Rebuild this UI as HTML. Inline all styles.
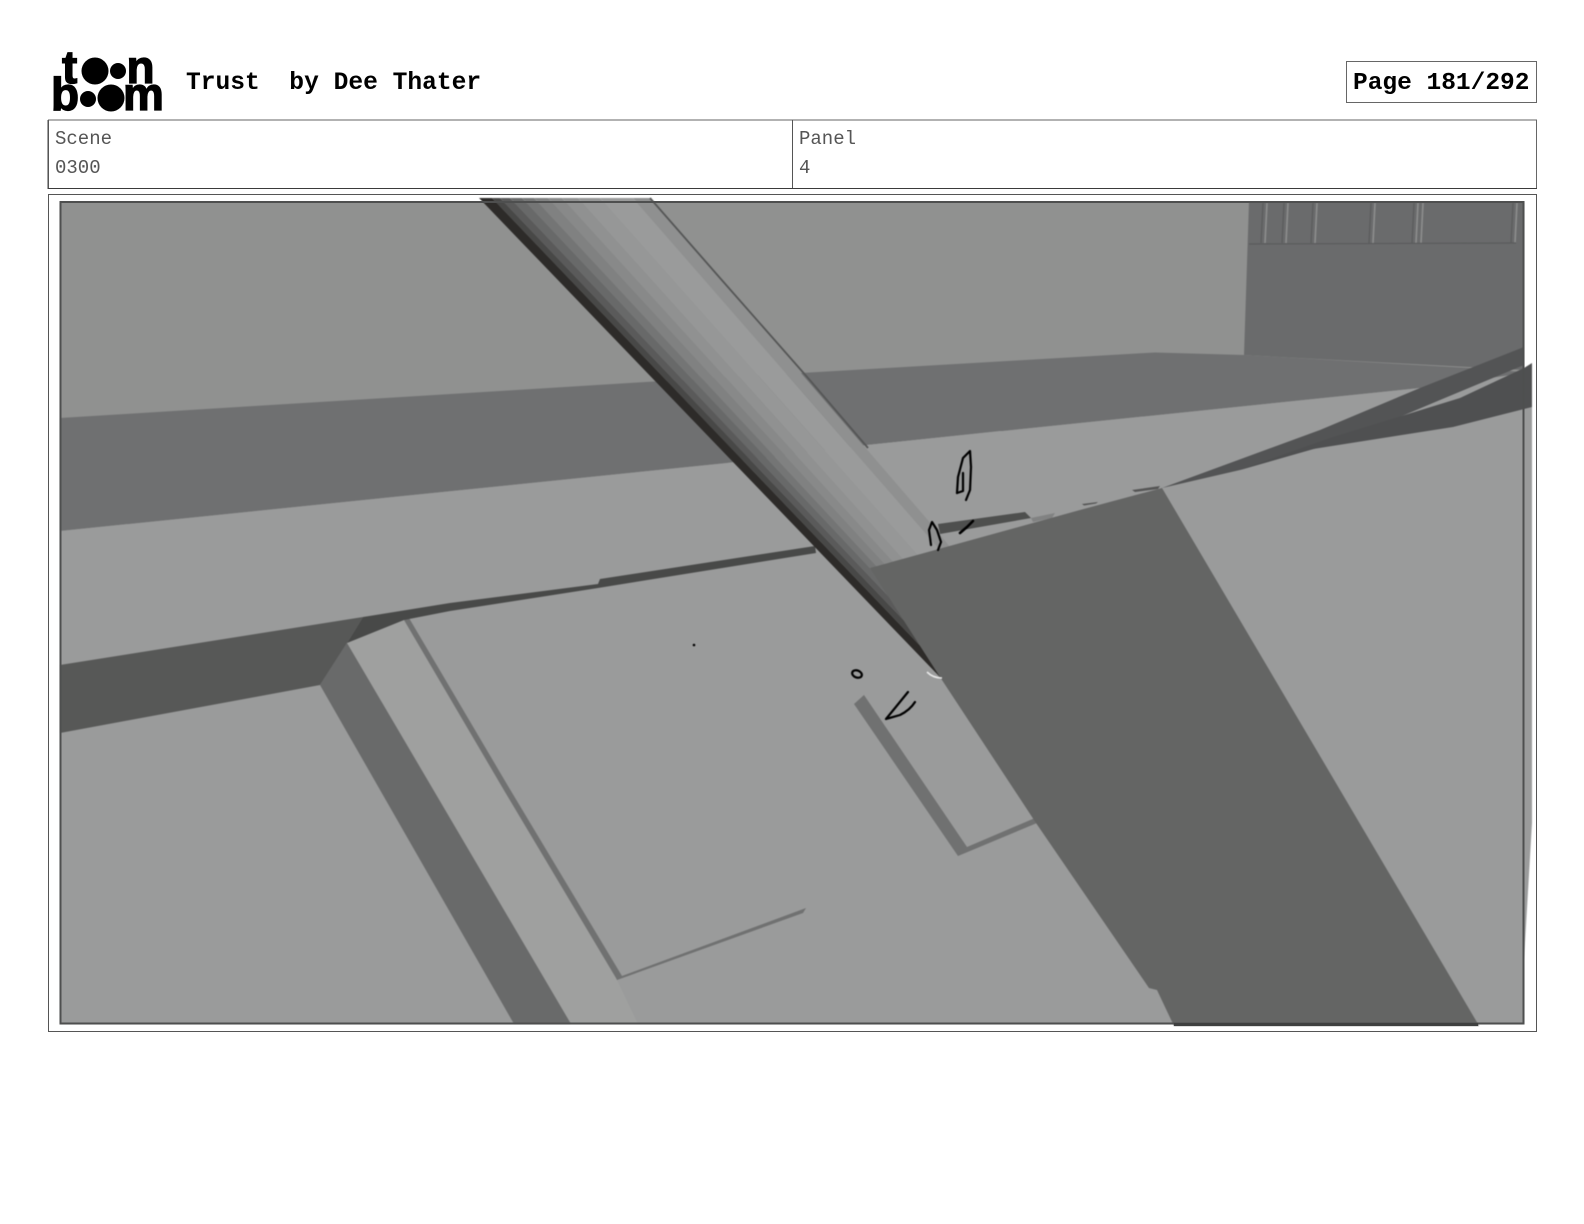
<!DOCTYPE html>
<html lang="en"><head><meta charset="utf-8"><title>Trust by Dee Thater - Page 181/292</title>
<style>
html,body{margin:0;padding:0;background:#fff}
body{width:1584px;height:1224px;position:relative;overflow:hidden}
svg{position:absolute;left:0;top:0}
.m{font-family:"Liberation Mono",monospace}
.l{font-family:"Liberation Sans",sans-serif;font-weight:700;font-size:46px;fill:#000;stroke:#000;stroke-width:1.3}
</style></head><body>
<svg width="1584" height="1224" viewBox="0 0 1584 1224" xmlns="http://www.w3.org/2000/svg">
<rect width="1584" height="1224" fill="#fff"/>
<!-- logo -->
<text class="l" x="62" y="83">t</text>
<circle cx="95" cy="71" r="13.5"/><circle cx="118" cy="71" r="8"/>
<text class="l" x="126.500" y="83">n</text>
<text class="l" x="51" y="110">b</text>
<circle cx="88" cy="99" r="8"/><circle cx="111" cy="98" r="13.5"/>
<text class="l" x="123" y="110">m</text>
<!-- header -->
<text class="m" x="186" y="89" font-size="24.6" font-weight="700" xml:space="preserve" style="white-space:pre">Trust  by Dee Thater</text>
<rect x="1346.5" y="61.5" width="190" height="41" fill="#fff" stroke="#666"/>
<text class="m" x="1353" y="89" font-size="24.5" font-weight="700">Page 181/292</text>
<!-- table -->
<rect x="48.5" y="120" width="1488" height="68.5" fill="#fff" stroke="#666"/>
<line x1="48" y1="120" x2="48" y2="189" stroke="#444" stroke-width="1"/>
<line x1="48" y1="188.5" x2="1537" y2="188.5" stroke="#3a3a3a"/>
<line x1="792.5" y1="120" x2="792.5" y2="188" stroke="#555"/>
<text class="m" x="55" y="144" font-size="19" fill="#555">Scene</text>
<text class="m" x="55" y="173" font-size="19" fill="#555">0300</text>
<text class="m" x="799" y="144" font-size="19" fill="#555">Panel</text>
<text class="m" x="799" y="173" font-size="19" fill="#555">4</text>
<!-- image frame -->
<rect x="48.5" y="194.5" width="1488" height="837" fill="#fff" stroke="#555"/>
<!-- scene -->
<g style="filter:blur(.45px)">
<rect x="60" y="202" width="1464" height="822" fill="#909190"/>
<!-- back wall -->
<polygon points="1249,202 1524,202 1524,370 1244,355" fill="#6a6b6c"/>
<g stroke="#5a5b5c" stroke-width="1.2"><line x1="1263" y1="203" x2="1261" y2="243"/><line x1="1284" y1="203" x2="1282" y2="243"/><line x1="1313" y1="203" x2="1311" y2="243"/><line x1="1371" y1="203" x2="1369" y2="243"/><line x1="1414" y1="203" x2="1412" y2="243"/><line x1="1513" y1="203" x2="1511" y2="243"/></g>
<g stroke="#8d8e8e" stroke-width="1.6"><line x1="1267" y1="203" x2="1265" y2="243"/><line x1="1288" y1="203" x2="1286" y2="243"/><line x1="1317" y1="203" x2="1315" y2="243"/><line x1="1375" y1="203" x2="1373" y2="243"/><line x1="1418" y1="203" x2="1416" y2="243"/><line x1="1423" y1="203" x2="1421" y2="243"/><line x1="1517" y1="203" x2="1515" y2="243"/></g>
<polyline points="1249,244 1516,243" fill="none" stroke="#5a5b5c" stroke-width="1.2"/>
<!-- band -->
<polygon points="60,418 646,382 1155,352.5 1244,355 1470,368 1524,372 1524,400 1420,388 867,445 727,463 60,531" fill="#6f7071"/>
<!-- floor -->
<polygon points="60,531 727,463 867,445 1420,388 1532,372 1532,823 1524,960 1524,1024 60,1024" fill="#9a9b9b"/>
<!-- strips lower left -->
<polygon points="347,643 404,620 616,978 638,1024 571,1024" fill="#9fa09f"/>
<polygon points="347,643 320,685 514,1024 571,1024" fill="#696a6a"/>
<polygon points="404,620 409,618 508,786 622,976 806,908 803,913 617,980 616,978 505,792" fill="#707171"/>
<!-- dark left band & seam -->
<polygon points="60,665 363,617 347,643 320,685 60,733" fill="#575857"/>
<polygon points="363,617 450,603 598,584 600,579 815,546 816,553 598,588 450,611 404,620 347,643" fill="#484948"/>
<!-- small strip -->
<polygon points="864,695 854,704 958,856 1037,823 1035,818 967,847" fill="#707171"/>
<!-- tube strips -->
<g>
<polygon points="479,198 492,198 972,700 962,700" fill="#2d2b29"/>
<polygon points="492,198 500,198 980,700 972,700" fill="#484847"/>
<polygon points="500,198 510,198 987,700 980,700" fill="#5a5a5a"/>
<polygon points="510,198 522,198 994,700 987,700" fill="#686969"/>
<polygon points="522,198 534,198 1001,700 994,700" fill="#747575"/>
<polygon points="534,198 548,198 1010,700 1001,700" fill="#808181"/>
<polygon points="548,198 562,198 1019,700 1010,700" fill="#888989"/>
<polygon points="562,198 578,198 1030,700 1019,700" fill="#909191"/>
<polygon points="578,198 600,198 1047,700 1030,700" fill="#969797"/>
<polygon points="600,198 633,198 1071,700 1047,700" fill="#9a9b9b"/>
<polygon points="633,198 650,198 1083,700 1071,700" fill="#8f9090"/>
</g>
<!-- floor cover right of the tube's lower-right edge -->
<polygon points="867,445 928,520 950,547 1162,488 1162,440 1000,431" fill="#9a9b9b"/>
<polygon points="938,524 1025,512 1031,518 940,534" fill="#4e4f4e"/>
<polygon points="1031,518 1055,513 1052,518 1033,522" fill="#818282"/>
<polygon points="1082,504 1098,502 1096,503.500 1084,505.500" fill="#555"/>
<polygon points="1132,490 1160,486 1158,489 1135,492" fill="#555"/>
<polyline points="650,198 720,278 808,378 868,448" fill="none" stroke="#555656" stroke-width="1.8"/>
<!-- wedges -->
<polygon points="1524,347 1420,388 1320,430 1162,488 1240,470 1345,440 1440,400 1524,365" fill="#535455"/>
<polygon points="1532,363 1532,407 1453,427 1313,449 1240,470 1330,438 1460,398 1524,368" fill="#4f5051"/>
<!-- big dark -->
<polygon points="870,568 937,549.500 1080,510 1162,488 1478,1024 1479,1026 1174,1026 1157,990 1149,988 1036,823 940,677" fill="#646564"/>
<!-- light sliver -->
<path d="M927,672 Q933,678 942,678" fill="none" stroke="#e8e8e8" stroke-width="1.6"/>
<!-- sketch lines -->
<g fill="none" stroke="#000" stroke-width="2.2" stroke-linecap="round" stroke-linejoin="round">
<path d="M957,493 L958,477 L963,458 L970,451 L971,467 L970,490 L966,500"/>
<path d="M957,493 L963,491 L963,473"/>
<path d="M931,545 L929,530 L932,522 L937,530 L941,542 L938,550"/>
<path d="M960,533 L967,527 L973,521" stroke-width="2.6"/>
<ellipse cx="857" cy="674" rx="5" ry="3.500" transform="rotate(20 857 674)"/>
<path d="M908,692 L895,708 L886,719 L900,715 Q910,710 915,702"/>
</g>
<circle cx="694" cy="645" r="1.300" fill="#000"/>
</g>
<!-- picture border -->
<rect x="60.500" y="202" width="1463" height="821.500" fill="none" stroke="#4e4f4f" stroke-width="2"/>
<rect x="1174" y="1023" width="304" height="3" fill="#3f4040"/>
</svg>
</body></html>
